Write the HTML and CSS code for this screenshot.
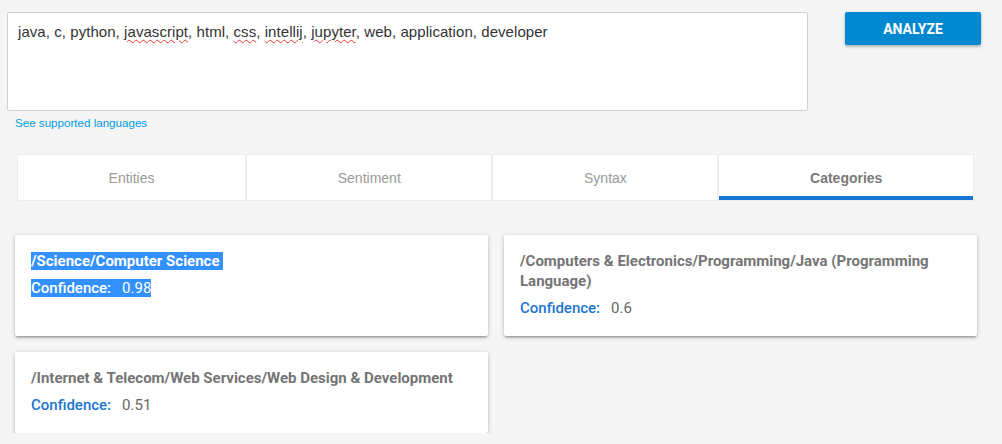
FILE: index.html
```html
<!DOCTYPE html>
<html>
<head>
<meta charset="utf-8">
<link rel="stylesheet" href="styles.css">
</head>
<body>
<div class="page">
  <div class="top">
    <div class="input-col">
      <div class="textarea">java, c, python, <span class="sp">javascript</span>, html, <span class="sp">css</span>, <span class="sp">intellij</span>, <span class="sp">jupyter</span>, web, application, developer</div>
      <a class="link">See supported languages</a>
    </div>
    <button class="analyze">ANALYZE</button>
  </div>

  <div class="tabs">
    <div class="tab">Entities</div>
    <div class="tab">Sentiment</div>
    <div class="tab">Syntax</div>
    <div class="tab active">Categories</div>
  </div>

  <div class="cards">
    <div class="card">
      <div class="title"><span class="sel">/Science/Computer Science&nbsp;</span></div>
      <div class="conf"><span class="sel"><span class="label">Confidence:</span><span class="value">0.98</span></span></div>
    </div>
    <div class="card">
      <div class="title">/Computers &amp; Electronics/Programming/Java (Programming Language)</div>
      <div class="conf"><span class="label">Confidence:</span><span class="value">0.6</span></div>
    </div>
    <div class="card">
      <div class="title">/Internet &amp; Telecom/Web Services/Web Design &amp; Development</div>
      <div class="conf"><span class="label">Confidence:</span><span class="value">0.51</span></div>
    </div>
  </div>
</div>
</body>
</html>
```

FILE: styles.css
```css
html, body {
  margin: 0;
  padding: 0;
  background: #f5f5f5;
}

.page {
  width: 1002px;
  font-family: "Liberation Sans", Arial, sans-serif;
}

.top {
  display: flex;
  align-items: flex-start;
  gap: 37px;
  padding: 12px 0 0 7px;
}

.input-col {
  width: 801px;
  display: flex;
  flex-direction: column;
}

.textarea {
  box-sizing: border-box;
  height: 99px;
  background: #fff;
  border: 1px solid #cfcfcf;
  border-radius: 2px;
  padding: 10px 10px;
  font-size: 15px;
  letter-spacing: 0.06px;
  line-height: 18px;
  color: #333;
}

.sp {
  text-decoration: underline wavy #e53935;
  text-decoration-thickness: 1px;
  text-underline-offset: 2px;
}

.link {
  margin: 5px 0 0 8px;
  font-size: 11.6px;
  line-height: 14px;
  color: #039be5;
  text-decoration: none;
}

.analyze {
  width: 136px;
  height: 33px;
  border: 0;
  border-radius: 2px;
  background: #0288d1;
  color: #fff;
  font-family: Roboto, "Liberation Sans", sans-serif;
  font-weight: 700;
  font-size: 14px;
  padding: 0;
  box-shadow: 0 2px 2px 0 rgba(0,0,0,.14), 0 1px 4px 0 rgba(0,0,0,.18);
}

.tabs {
  display: flex;
  width: 957px;
  margin: 24px 0 0 17px;
}

.tab {
  flex: 1 1 auto;
  box-sizing: border-box;
  height: 47px;
  background: #fff;
  border: 1px solid #ececec;
  display: flex;
  align-items: center;
  justify-content: center;
  font-size: 14px;
  color: #9a9a9a;
}

.tab.active {
  font-weight: 700;
  color: #7a7a7a;
  box-shadow: inset 0 -4px 0 #1976d2;
}

.cards {
  display: grid;
  grid-template-columns: 473px 473px;
  gap: 16px;
  margin: 34px 0 0 15px;
  align-items: stretch;
}

.card {
  background: #fff;
  border-radius: 2px;
  padding: 16px 16px 18px;
  box-shadow: 0 2px 2px 0 rgba(0,0,0,.14), 0 3px 1px -2px rgba(0,0,0,.12), 0 1px 5px 0 rgba(0,0,0,.2);
  font-family: Roboto, "Liberation Sans", sans-serif;
  font-size: 15px;
}

.title {
  font-weight: 700;
  color: #757575;
  line-height: 20px;
}

.conf {
  margin-top: 7px;
  line-height: 20px;
}

.label {
  color: #1976d2;
  font-weight: 500;
}

.value {
  color: #666;
  margin-left: 11px;
}

.sel {
  background: #3390ff;
  color: #fff;
}

.sel .label, .sel .value {
  color: #fff;
}
```
